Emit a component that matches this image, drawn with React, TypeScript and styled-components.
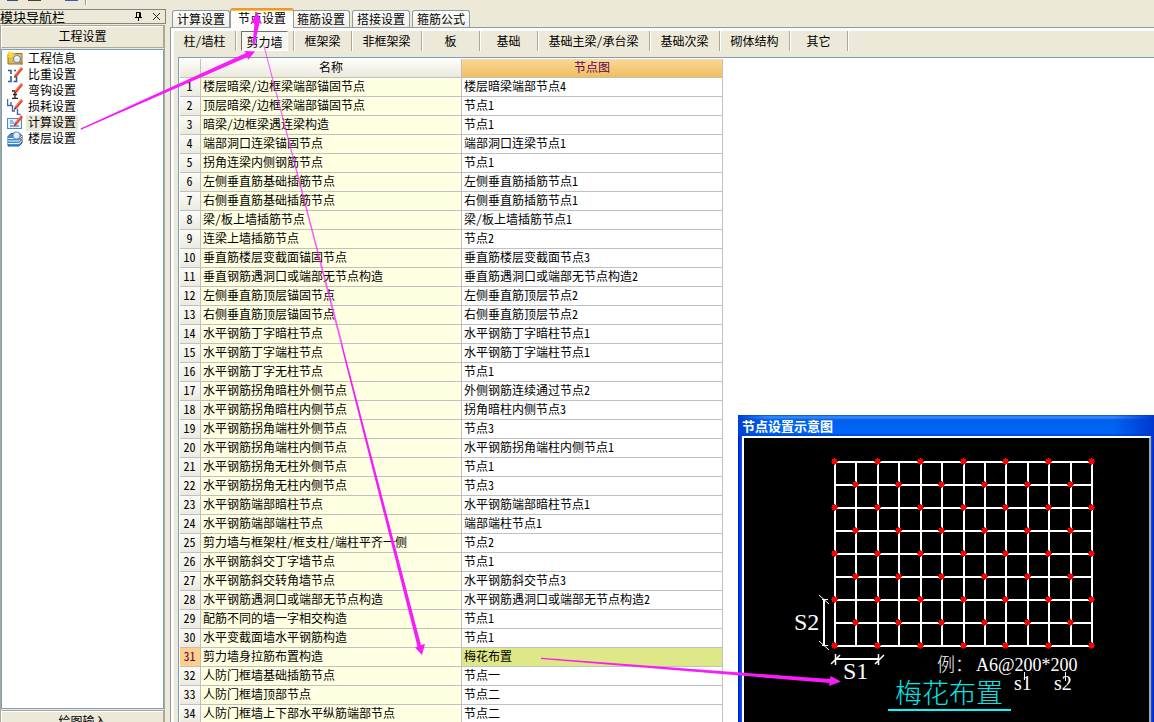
import React from "react";
import styled, { createGlobalStyle, css } from "styled-components";

const face = "#ece9d8";
const gridLine = "#c0c0c0";
const edge = "#919b9c";
const magenta = "#f81cf8";

const GlobalStyle = createGlobalStyle`
  *, *::before, *::after { box-sizing: border-box; }
  html, body { margin: 0; height: 100%; overflow: hidden; }
  body, button, table {
    font-family: "Noto Sans Mono CJK SC", "Noto Sans CJK SC", "Liberation Sans", sans-serif;
    font-size: 12px;
    line-height: 16px;
    color: #000;
  }
  button { margin: 0; padding: 0; border: 0; background: none; white-space: nowrap; }
`;

const Shell = styled.div`
  position: relative;
  display: flex;
  flex-direction: column;
  height: 100vh;
  overflow: hidden;
  background: ${face};
`;

const TopStrip = styled.div`
  display: flex;
  flex: none;
  height: 5px;
  padding-left: 7px;
`;

const StripMark = styled.span<{ $w: number; $gap: number; $color: string }>`
  width: ${(p) => p.$w}px;
  height: 1px;
  margin-right: ${(p) => p.$gap}px;
  background: ${(p) => p.$color};
`;

const StripDivider = styled.span`
  width: 2px;
  border-left: 1px solid #9d9a8c;
  border-right: 1px solid #fff;
`;

const Body = styled.div`
  display: flex;
  flex: 1;
  min-height: 0;
`;

const Sidebar = styled.aside`
  display: flex;
  flex-direction: column;
  flex: none;
  width: 170px;
  padding: 4px 4px 0 0;
`;

const SidebarTitle = styled.header`
  display: flex;
  align-items: center;
  flex: none;
  height: 15px;
  border: 1px solid #85837a;
  border-left: 0;
  margin-bottom: 1px;
`;

const TitleText = styled.span`
  flex: 1;
  font-size: 13px;
  line-height: 13px;
`;

const TitleButton = styled.button`
  display: flex;
  width: 18px;
  justify-content: center;
`;

const SidebarBody = styled.div`
  display: flex;
  flex-direction: column;
  flex: 1;
  min-height: 0;
  margin-right: 1px;
  border-left: 1px solid #aca899;
  border-right: 1px solid #aca899;
`;

const SectionButton = styled.button`
  flex: none;
  height: 23px;
  padding-bottom: 2px;
  border: 1px solid #fff;
  border-top: 1px solid #aca899;
  border-right-color: #aca899;
  border-bottom-color: #aca899;
  box-shadow: inset 0 1px #fff;
  background: ${face};
`;

const ModuleList = styled.ul`
  flex: 1;
  min-height: 0;
  margin: 1px 0;
  padding: 1px 5px;
  border: 1px solid #7f9db9;
  background: #fff;
  list-style: none;
`;

const ModuleButton = styled.button<{ $selected?: boolean }>`
  display: flex;
  align-items: center;
  gap: 3px;
  height: 16px;

  span {
    padding: 0 2px 2px;
    line-height: 14px;
    background: ${(p) => (p.$selected ? face : "transparent")};
  }
`;

const FooterClip = styled.div`
  flex: none;
  height: 12px;
  overflow: hidden;
  display: flex;
  flex-direction: column;
`;

const Main = styled.main`
  display: flex;
  flex-direction: column;
  flex: 1;
  min-width: 0;
`;

const TabStrip = styled.div`
  display: flex;
  align-items: flex-end;
  flex: none;
  gap: 2px;
  height: 22px;
  padding-left: 2px;
`;

const Tab = styled.button<{ $active?: boolean }>`
  position: relative;
  flex: none;
  width: 58px;
  height: 17px;
  border: 1px solid ${edge};
  border-bottom: 0;
  border-radius: 3px 3px 0 0;
  background: linear-gradient(#fff, #f0efe6);

  ${(p) =>
    p.$active &&
    css`
      z-index: 1;
      width: 64px;
      height: 20px;
      margin: 0 -4px -1px -2px;
      padding-bottom: 2px;
      border-top: 2px solid #f0982c;
      background: #fdfdfc;
      box-shadow: inset 0 1px #ffc73c;
    `}
`;

const Panel = styled.section`
  display: flex;
  flex-direction: column;
  flex: 1;
  min-height: 0;
  padding: 3px 0 0 3px;
  border-top: 1px solid ${edge};
  border-left: 1px solid ${edge};
  background: #fcfcfe;
`;

const PanelInner = styled.div`
  display: flex;
  flex-direction: column;
  flex: 1;
  min-height: 0;
  padding-left: 4px;
  background: ${face};
`;

const MemberBar = styled.nav`
  display: flex;
  flex: none;
  height: 26px;
  margin-left: -4px;
`;

const MemberCell = styled.div<{ $w: number }>`
  display: flex;
  flex: none;
  width: ${(p) => p.$w}px;
  height: 20px;
  border-right: 1px solid #aca899;
  box-shadow: 1px 0 #fff;
`;

const MemberButton = styled.button<{ $active?: boolean }>`
  flex: 1;

  ${(p) =>
    p.$active &&
    css`
      margin: 0 5px;
      padding-top: 2px;
      border: 1px solid #fff;
      border-top-color: #716f64;
      border-left-color: #716f64;
      background: #f7f6f0;
    `}
`;

const GridArea = styled.div`
  flex: 1;
  min-height: 0;
  padding: 1px 0 0 1px;
  overflow: hidden;
  border-top: 1px solid #7f9db9;
  border-left: 1px solid #7f9db9;
  background: #fff;
`;

const Grid = styled.table`
  table-layout: fixed;
  width: 543px;
  border-collapse: separate;
  border-spacing: 0;

  th, td {
    height: 19px;
    padding: 0 2px 2px;
    overflow: hidden;
    border-right: 1px solid ${gridLine};
    border-bottom: 1px solid ${gridLine};
    font-weight: 400;
    text-align: left;
    white-space: nowrap;
  }
`;

const Col = styled.col<{ $w: number }>`
  width: ${(p) => p.$w}px;
`;

const HeadCell = styled.th<{ $current?: boolean }>`
  && { text-align: center; }
  color: ${(p) => (p.$current ? "#5c005c" : "#000")};
  background: ${(p) =>
    p.$current ? "linear-gradient(#f9d99c, #f0be5c)" : "linear-gradient(#fdfdfb, #ebe9dc)"};
`;

const NumberCell = styled.th<{ $current?: boolean }>`
  && { padding: 0 1px 2px 0; text-align: center; }
  color: ${(p) => (p.$current ? "#5c005c" : "#000")};
  background: ${(p) => (p.$current ? "#ffcf8a" : "linear-gradient(#fbfbf9, #eceadf)")};
`;

const NameCell = styled.td`
  background: #ffffe1;
`;

const NodeCell = styled.td<{ $current?: boolean }>`
  background: ${(p) => (p.$current ? "#dfe888" : "#fff")};
`;

const Preview = styled.section`
  position: absolute;
  top: 415px;
  right: 0;
  bottom: 0;
  left: 738px;
  display: flex;
  flex-direction: column;
  padding: 0 3px 0 4px;
  background: linear-gradient(90deg, #0019cf, #0a5be8 4px, #0a5be8 calc(100% - 3px), #0019cf);
`;

const PreviewTitle = styled.h2`
  flex: none;
  height: 21px;
  margin: 0 -3px 0 -4px;
  padding: 2px 4px 0;
  color: #fff;
  font-size: 13px;
  font-weight: 700;
  line-height: 18px;
  background:
    linear-gradient(90deg, #0040d0, transparent 30px, transparent calc(100% - 40px), #0038d0),
    linear-gradient(#0a50d0, #3a90ff 2px, #0060ea 5px, #0064f4 14px, #0066fc 18px, #0042c8);
`;

const Canvas = styled.div`
  flex: 1;
  min-height: 0;
  overflow: hidden;
  border: 2px solid #fff;
  border-right-color: #aca899;
  border-bottom: 0;
  background: #000;

  svg { display: block; }
`;

const Annotations = styled.svg`
  position: absolute;
  z-index: 2;
  top: 0;
  left: 0;
  width: 100%;
  height: 100%;
  overflow: visible;
  pointer-events: none;
`;

const Pencil = () => (
  <g>
    <path d="M14 0 L16 2 L10 9.5 L7 11 L7.8 7.6 Z" fill="#e8442c" />
    <path d="M14 1 L8.5 7.6" stroke="#ff9a7c" strokeWidth="1" />
    <path d="M7 11 L7.8 8.6 L9.2 9.8 Z" fill="#7a3020" />
  </g>
);

const Lens = ({ x, y }: { x: number; y: number }) => (
  <g>
    <path d={`M${x + 2.4} ${y + 2.4} L${x + 5.4} ${y + 5.6}`} stroke="#c87a3c" strokeWidth="2" />
    <circle cx={x} cy={y} r="3.5" fill="#d8eefc" stroke="#7a8ea8" strokeWidth="1.2" />
    <path d={`M${x - 2} ${y - 0.5} q1 -2 3 -1.6`} stroke="#fff" fill="none" />
  </g>
);

const icons: Record<string, React.ReactNode> = {
  info: (
    <>
      <path d="M1 3 H7 L8.5 2.5 H15 V13 H1 Z" fill="#e8b850" stroke="#98701c" />
      <path d="M2 5 H14" stroke="#fff0b0" />
      <path d="M3 0 V7 M0 3.5 H7 M1 1 L6 6 M6 1 L1 6" stroke="#ffd820" strokeWidth="1.2" />
      <Lens x={10} y={8} />
    </>
  ),
  weight: (
    <>
      <path d="M1 3.5 H4 V7 M4 9 V14.5 H1 M7 3.5 H9 M9.500 9 V14.500 H6.500" fill="none" stroke="#2c58a8" strokeWidth="1.600" />
      <Pencil />
    </>
  ),
  hook: (
    <>
      <path d="M5 8 H8 V15 M5 15.500 H11 M6 11.500 H10" fill="none" stroke="#222" strokeWidth="1.300" />
      <Pencil />
    </>
  ),
  loss: (
    <>
      <path d="M0.500 0 V6.500 H4 V3 M5.500 6 V12 H8 M10.500 10 V15.500 H13.500" fill="none" stroke="#3868b0" strokeWidth="1.400" />
      <Pencil />
    </>
  ),
  calc: (
    <>
      <rect x="0.500" y="3.500" width="14" height="10" fill="#e4f0fc" stroke="#4a88d0" />
      <path d="M3 8 H7 M3 6 H6" fill="none" stroke="#4a80c8" />
      <path d="M3 11 H12" stroke="#2c5ca8" />
      <Pencil />
    </>
  ),
  floor: (
    <>
      <path d="M4 2.500 H13 L15 4.500 V12 L12 15 H1 V5.500 Z" fill="#3c90d8" stroke="#1c5ca0" />
      <path d="M1 7.500 H12 L15 5 M1 10 H12 L15 7.500 M1 12.500 H12 L15 10" fill="none" stroke="#e4f4ff" />
      <Lens x={9.500} y={4.500} />
    </>
  ),
};

const modules = [
  { icon: "info", label: "工程信息" },
  { icon: "weight", label: "比重设置" },
  { icon: "hook", label: "弯钩设置" },
  { icon: "loss", label: "损耗设置" },
  { icon: "calc", label: "计算设置", selected: true },
  { icon: "floor", label: "楼层设置" },
];

const tabs = ["计算设置", "节点设置", "箍筋设置", "搭接设置", "箍筋公式"];

const members: [string, number][] = [
  ["柱/墙柱", 62],
  ["剪力墙", 58],
  ["框架梁", 58],
  ["非框架梁", 70],
  ["板", 58],
  ["基础", 58],
  ["基础主梁/承台梁", 112],
  ["基础次梁", 70],
  ["砌体结构", 70],
  ["其它", 58],
];

const rows: [string, string][] = [
  ["楼层暗梁/边框梁端部锚固节点", "楼层暗梁端部节点4"],
  ["顶层暗梁/边框梁端部锚固节点", "节点1"],
  ["暗梁/边框梁遇连梁构造", "节点1"],
  ["端部洞口连梁锚固节点", "端部洞口连梁节点1"],
  ["拐角连梁内侧钢筋节点", "节点1"],
  ["左侧垂直筋基础插筋节点", "左侧垂直筋插筋节点1"],
  ["右侧垂直筋基础插筋节点", "右侧垂直筋插筋节点1"],
  ["梁/板上墙插筋节点", "梁/板上墙插筋节点1"],
  ["连梁上墙插筋节点", "节点2"],
  ["垂直筋楼层变截面锚固节点", "垂直筋楼层变截面节点3"],
  ["垂直钢筋遇洞口或端部无节点构造", "垂直筋遇洞口或端部无节点构造2"],
  ["左侧垂直筋顶层锚固节点", "左侧垂直筋顶层节点2"],
  ["右侧垂直筋顶层锚固节点", "右侧垂直筋顶层节点2"],
  ["水平钢筋丁字暗柱节点", "水平钢筋丁字暗柱节点1"],
  ["水平钢筋丁字端柱节点", "水平钢筋丁字端柱节点1"],
  ["水平钢筋丁字无柱节点", "节点1"],
  ["水平钢筋拐角暗柱外侧节点", "外侧钢筋连续通过节点2"],
  ["水平钢筋拐角暗柱内侧节点", "拐角暗柱内侧节点3"],
  ["水平钢筋拐角端柱外侧节点", "节点3"],
  ["水平钢筋拐角端柱内侧节点", "水平钢筋拐角端柱内侧节点1"],
  ["水平钢筋拐角无柱外侧节点", "节点1"],
  ["水平钢筋拐角无柱内侧节点", "节点3"],
  ["水平钢筋端部暗柱节点", "水平钢筋端部暗柱节点1"],
  ["水平钢筋端部端柱节点", "端部端柱节点1"],
  ["剪力墙与框架柱/框支柱/端柱平齐一侧", "节点2"],
  ["水平钢筋斜交丁字墙节点", "节点1"],
  ["水平钢筋斜交转角墙节点", "水平钢筋斜交节点3"],
  ["水平钢筋遇洞口或端部无节点构造", "水平钢筋遇洞口或端部无节点构造2"],
  ["配筋不同的墙一字相交构造", "节点1"],
  ["水平变截面墙水平钢筋构造", "节点1"],
  ["剪力墙身拉筋布置构造", "梅花布置"],
  ["人防门框墙基础插筋节点", "节点一"],
  ["人防门框墙顶部节点", "节点二"],
  ["人防门框墙上下部水平纵筋端部节点", "节点二"],
];

const currentRow = 31;

const gridXs = Array.from({ length: 13 }, (_, i) => Math.round(91 + i * 21.42));
const gridYs = Array.from({ length: 9 }, (_, i) => 24 + i * 23);
const serif = '"Liberation Serif", serif';
const cjk = '"Noto Sans CJK SC", sans-serif';

const TieBarDrawing = () => (
  <svg width="405" height="284" viewBox="0 0 405 284" role="img" aria-label="梅花布置">
    <g stroke="#fff" strokeWidth="2">
      {gridXs.map((x) => (
        <line key={x} x1={x} y1={gridYs[0]} x2={x} y2={gridYs[8]} />
      ))}
      {gridYs.map((y) => (
        <line key={y} x1={gridXs[0]} y1={y} x2={gridXs[12]} y2={y} />
      ))}
      <path d="M80 161 V207 M91 221 H135" />
    </g>
    <g fill="#f00">
      {gridYs.flatMap((y, j) =>
        gridXs
          .filter((_, i) => (i + j) % 2 === 0)
          .map((x) => (
            <path
              key={`${x}-${y}`}
              d={`M${x - 3} ${y - 3} h2 v-1 h1 v1 h2 v2 h1 v1 h-1 v2 h-2 v1 h-1 v-1 h-2 v-2 h-1 v-1 h1 z`}
            />
          ))
      )}
    </g>
    <g stroke="#fff" fill="none">
      <path d="M75 157 L85 166 M75 203 L85 212 M78 161.500 H84 M78 207.500 H84" />
      <path d="M87 226 L96 217 M131 226 L140 217 M91.500 216 V227 M134.500 216 V227" strokeWidth="1.500" />
      <path d="M280.500 234 V242 M321.500 234 V243" />
    </g>
    <g fill="#fff" fontFamily={serif} fontSize="24">
      <text x="50" y="192">S2</text>
      <text x="99" y="241">S1</text>
    </g>
    <text x="193" y="233" fill="#fff" fontFamily={cjk} fontSize="18" fontWeight="300">例：</text>
    <g fill="#fff" fontFamily={serif}>
      <text x="232" y="233" fontSize="18">A6@200*200</text>
      <text x="270" y="252" fontSize="20">s1</text>
      <text x="310" y="252" fontSize="20">s2</text>
    </g>
    <text x="151" y="265" fill="#00e8e8" fontFamily={cjk} fontSize="27" fontWeight="300">梅花布置</text>
    <path d="M144 272 H267" stroke="#0ff" strokeWidth="2" />
  </svg>
);

export default function App() {
  return (
    <Shell>
      <GlobalStyle />
      <TopStrip>
        <StripMark $w={11} $gap={10} $color="#34546c" />
        <StripMark $w={13} $gap={24} $color="#4c3c34" />
        <StripMark $w={13} $gap={7} $color="#4850c0" />
        <StripDivider />
      </TopStrip>
      <Body>
        <Sidebar>
          <SidebarTitle>
            <TitleText>模块导航栏</TitleText>
            <TitleButton aria-label="固定">
              <svg width="9" height="9" viewBox="0 0 9 9">
                <path d="M2.500 0.500 H6.500 V5 M2.500 0 V5 M5.500 1 V5 M1 5.500 H8 M4.500 5 V9" fill="none" stroke="#000" />
              </svg>
            </TitleButton>
            <TitleButton aria-label="关闭">
              <svg width="9" height="9" viewBox="0 0 9 9">
                <path d="M1 1 L8 8 M8 1 L1 8" stroke="#222" />
              </svg>
            </TitleButton>
          </SidebarTitle>
          <SidebarBody>
            <SectionButton>工程设置</SectionButton>
            <ModuleList>
              {modules.map((m) => (
                <li key={m.label}>
                  <ModuleButton $selected={m.selected}>
                    <svg width="16" height="16" viewBox="0 0 16 16">{icons[m.icon]}</svg>
                    <span>{m.label}</span>
                  </ModuleButton>
                </li>
              ))}
            </ModuleList>
            <FooterClip>
              <SectionButton>绘图输入</SectionButton>
            </FooterClip>
          </SidebarBody>
        </Sidebar>
        <Main>
          <TabStrip role="tablist">
            {tabs.map((t, i) => (
              <Tab key={t} role="tab" aria-selected={i === 1} $active={i === 1}>
                {t}
              </Tab>
            ))}
          </TabStrip>
          <Panel>
            <PanelInner>
              <MemberBar>
                {members.map(([label, width], i) => (
                  <MemberCell key={label} $w={width}>
                    <MemberButton $active={i === 1}>{label}</MemberButton>
                  </MemberCell>
                ))}
              </MemberBar>
              <GridArea>
                <Grid>
                  <colgroup>
                    <Col $w={21} />
                    <Col $w={261} />
                    <Col $w={261} />
                  </colgroup>
                  <thead>
                    <tr>
                      <HeadCell />
                      <HeadCell scope="col">名称</HeadCell>
                      <HeadCell scope="col" $current>节点图</HeadCell>
                    </tr>
                  </thead>
                  <tbody>
                    {rows.map(([name, node], i) => (
                      <tr key={i}>
                        <NumberCell scope="row" $current={i + 1 === currentRow}>{i + 1}</NumberCell>
                        <NameCell>{name}</NameCell>
                        <NodeCell $current={i + 1 === currentRow}>{node}</NodeCell>
                      </tr>
                    ))}
                  </tbody>
                </Grid>
              </GridArea>
            </PanelInner>
          </Panel>
        </Main>
      </Body>
      <Preview>
        <PreviewTitle>节点设置示意图</PreviewTitle>
        <Canvas>
          <TieBarDrawing />
        </Canvas>
      </Preview>
      <Annotations aria-hidden="true">
        <g fill={magenta}>
          <path d="M80.500 128.500 L246 53 L244 51 L255 51.500 L248 60 L247.500 57 L81 129.800 Z" />
          <path d="M252.500 45 L254.500 23 L251 23 L257 12 L261.500 23 L259.500 23 L254.500 45.500 Z" />
          <path d="M541 657.800 L830 679 L830.500 676 L841 681.500 L829 686 L829.500 683 L541 659 Z" />
          <path d="M341 345 L342.500 345 L421 645 L425 644 L422 655 L415 647.500 L417.500 646.500 Z" />
        </g>
        <path d="M263.500 46 L264.500 46 L343 345 L341 345 Z" fill={magenta} fillOpacity="0.700" />
      </Annotations>
    </Shell>
  );
}
